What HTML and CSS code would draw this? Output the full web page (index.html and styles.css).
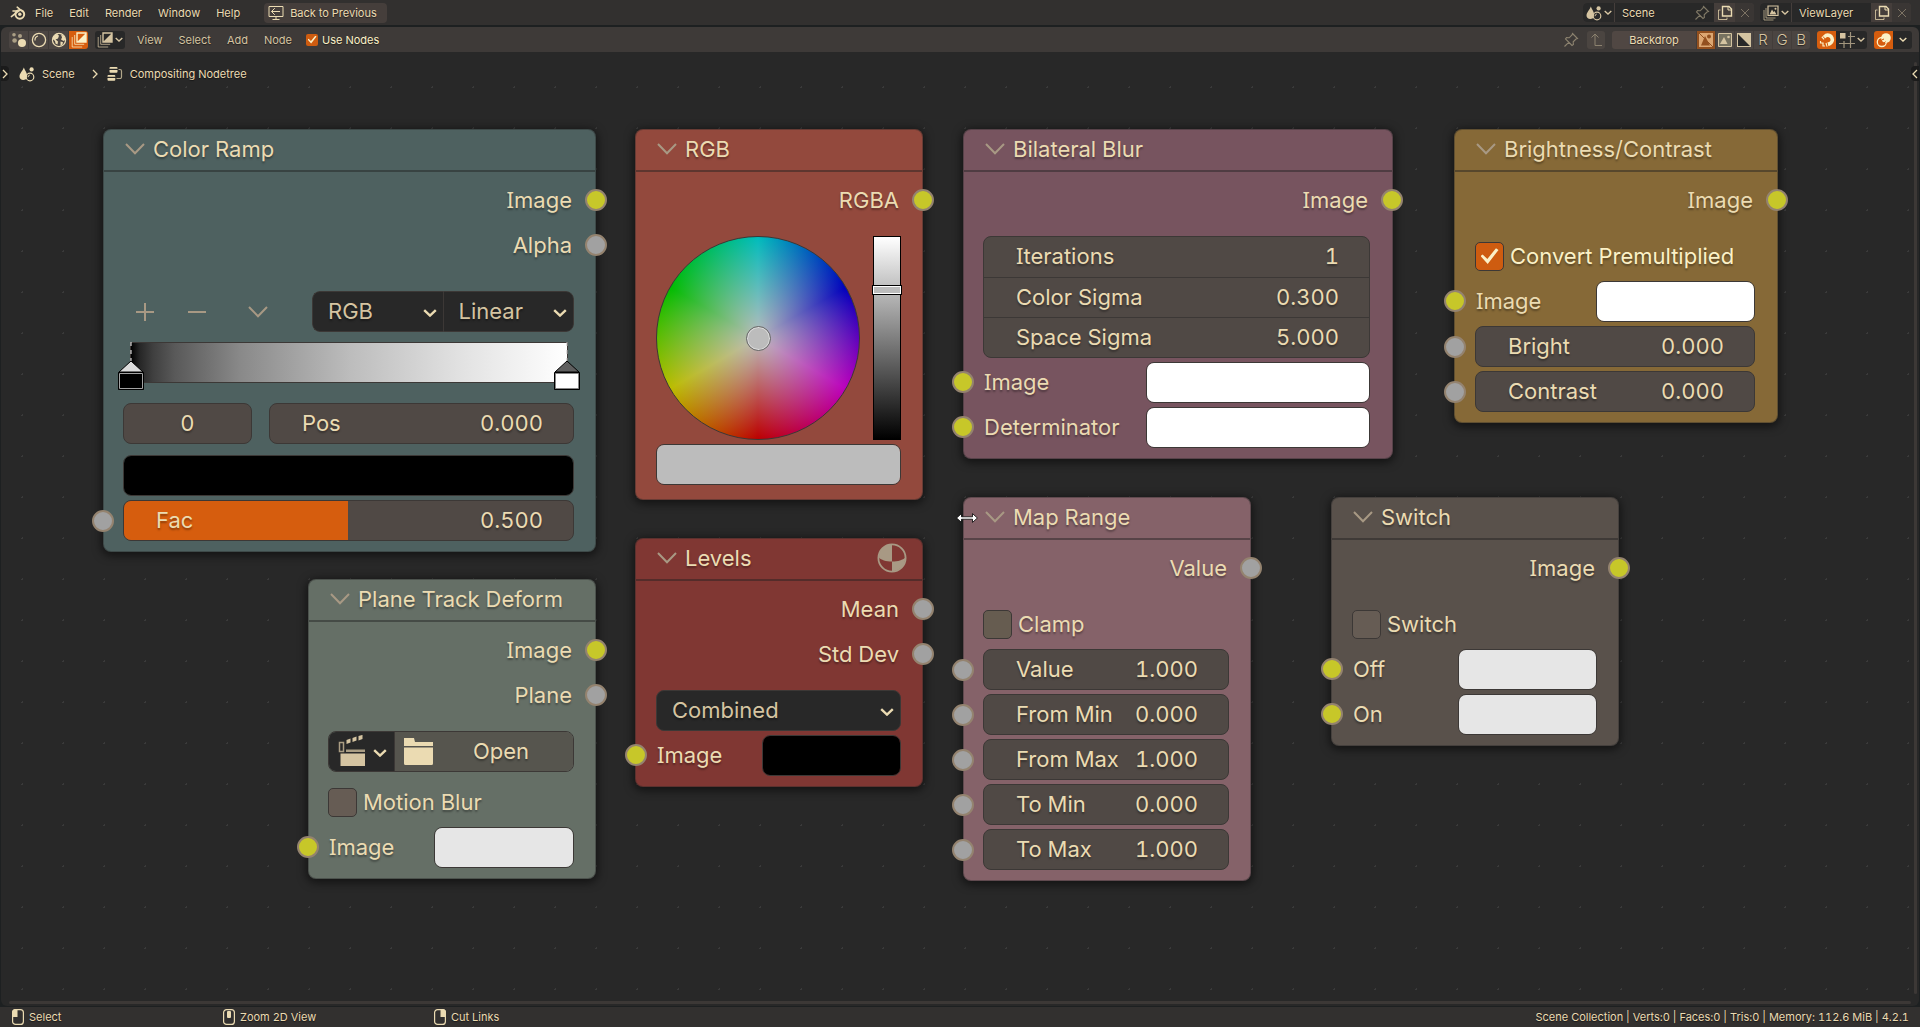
FILE: index.html
```html
<!DOCTYPE html>
<html lang="en">
<head>
<meta charset="utf-8">
<meta name="viewport" content="width=device-width, initial-scale=1">
<title>Compositing Nodetree</title>
<link rel="stylesheet" href="styles.css">
</head>
<body>
<svg class="sprite" aria-hidden="true">
  <symbol id="chev" viewBox="0 0 14 8"><path d="M1.2 1.2 7 6.6 12.8 1.2" fill="none" stroke="currentColor" stroke-width="2.4"/></symbol>
  <symbol id="fold" viewBox="0 0 20 12"><path d="M1 1 10 10.2 19 1" fill="none" stroke="currentColor" stroke-width="2"/></symbol>
  <symbol id="blender" viewBox="0 0 16 16"><g fill="none" stroke="currentColor"><circle cx="9.8" cy="9.3" r="4.4" stroke-width="2"/><path d="M1.4 11.6 9.8 5M3 6h6M7.2 2.2 13.2 7" stroke-width="1.6" stroke-linecap="round"/></g><circle cx="9.8" cy="9.3" r="1.7" fill="currentColor"/></symbol>
  <symbol id="back" viewBox="0 0 16 16"><path d="M1 1.5h14v10H1zM8 12v2.5M4.5 14.5h7M12 6.5H3.5M6.8 3.2 3.5 6.5l3.3 3.3" fill="none" stroke="currentColor"/></symbol>
  <symbol id="scene" viewBox="0 0 16 16"><path d="M4.8 1.5C6 4.8 8.2 7 8.2 10A5.4 5.4 0 0 0 7 13.3c-3.200 1.800-6.500.2-6.500-2.800C.5 7.500 3.800 4.800 4.800 1.500z" fill="currentColor"/><circle cx="12.600" cy="3.400" r="2.100" fill="currentColor"/><circle cx="11" cy="11" r="3.800" fill="none" stroke="currentColor" stroke-width="1.200"/><path d="M9 11.200a2.200 2.200 0 0 1 1.800-2.200" fill="none" stroke="currentColor"/></symbol>
  <symbol id="nodetree" viewBox="0 0 16 16"><path d="M3.500 1h6a1 1 0 0 1 1 1v.8h-8V2a1 1 0 0 1 1-1zM2.500 4h8v1.800a1 1 0 0 1-1 1h-6a1 1 0 0 1-1-1zM1.500 9h5.800a1 1 0 0 1 1 1v.8H.5V10a1 1 0 0 1 1-1zM.5 12h7.800v1.800a1 1 0 0 1-1 1H1.500a1 1 0 0 1-1-1z" fill="currentColor"/><path d="M11.500 3.500h1.500a1.500 1.500 0 0 1 1.500 1.500v6a1.500 1.500 0 0 1-1.500 1.500H9.500" fill="none" stroke="currentColor" stroke-width="1.200" opacity=".7"/></symbol>
  <symbol id="dots" viewBox="0 0 16 16"><circle cx="11" cy="11" r="4" fill="currentColor"/><g fill="currentColor" opacity=".6"><circle cx="3" cy="2.800" r="1.800"/><circle cx="9" cy="4" r="2"/><circle cx="3.600" cy="8.500" r="2.300"/></g></symbol>
  <symbol id="ball" viewBox="0 0 16 16"><circle cx="8" cy="8" r="6.600" fill="none" stroke="currentColor" stroke-width="1.300"/><path d="M4 8.500A4.300 4.300 0 0 1 7 4" fill="none" stroke="currentColor" stroke-width="1.200"/></symbol>
  <symbol id="world" viewBox="0 0 16 16"><circle cx="8" cy="8" r="6.600" fill="none" stroke="currentColor" stroke-width="1.200"/><path d="M2 4.500 6 1.800l2 2-1 2.700-2.500 1 2.500 2-.5 3-2-1-.500-2.500L1.600 7zM10 2.500l3.500 1.500.8 4-1.800 1-2.500-1.500 1-2zM9.500 9.500l2.500.7-.5 2.300-2 1.500z" fill="currentColor"/></symbol>
  <symbol id="comp" viewBox="0 0 16 16"><path d="M6 1h9v9H6z" fill="none" stroke="currentColor" stroke-width="1.400"/><path d="M15 1v9H6z" fill="currentColor"/><path d="M3.700 3v9.300h9.500M1.200 5v10h10" fill="none" stroke="currentColor" opacity=".75"/></symbol>
  <symbol id="layers" viewBox="0 0 16 16"><path d="M5 1h10v9.500H5z" fill="none" stroke="currentColor" stroke-width="1.200"/><path d="M6.500 9.500 9 4.500l1.500 2.500 1-1 2 3.500z" fill="currentColor"/><circle cx="12.500" cy="3.700" r="1" fill="currentColor"/><path d="M3 3v10h9.500M1 5v10h9.500" fill="none" stroke="currentColor" opacity=".7"/></symbol>
  <symbol id="pin" viewBox="0 0 16 16"><path d="M9.500 1.500 14.500 6.500 13 7l-2.800 2.800.2 2.700-1.400 1L2.500 7l1-1.400 2.700.2L9 3zM5.700 10.300 1.500 14.500" fill="none" stroke="currentColor" stroke-width="1.100"/></symbol>
  <symbol id="copy" viewBox="0 0 16 16"><path d="M5.500 1.500H12L14.500 4v7h-9z" fill="none" stroke="currentColor" stroke-width="1.400"/><path d="M11 1.500V5h3.500" fill="none" stroke="currentColor"/><path d="M3.500 5h-2v9.500H10v-2" fill="none" stroke="currentColor" opacity=".75"/></symbol>
  <symbol id="cross" viewBox="0 0 16 16"><path d="m4 4 8 8M12 4l-8 8" stroke="currentColor"/></symbol>
  <symbol id="up" viewBox="0 0 16 16"><path d="M7 2v11.500h7M3.500 5.500 7 2l3.500 3.500" fill="none" stroke="currentColor"/></symbol>
  <symbol id="imga" viewBox="0 0 16 16"><path fill-rule="evenodd" d="M1 1h14v14H1zM3 13.500h9L7 4zM11 2.500a2 2 0 1 0 .01 4 2 2 0 0 0 0-4z" fill="currentColor"/><path d="m1 1 14 14" stroke="#93501f"/></symbol>
  <symbol id="img" viewBox="0 0 16 16"><path d="M1.500 1.500h13v13h-13z" fill="#777260" stroke="currentColor"/><path d="M3 12 7 5l3.500 7z" fill="currentColor"/><circle cx="11.500" cy="5" r="1.300" fill="currentColor"/></symbol>
  <symbol id="alpha" viewBox="0 0 16 16"><path d="M1 1h14v14H1z" fill="currentColor"/><path d="M2 2v12h12z" fill="#282828"/></symbol>
  <symbol id="magnet" viewBox="0 0 16 16"><path d="M3.500 6.500 7 3.500a4.500 4.500 0 1 1 3.500 8.300L7 13" fill="none" stroke="currentColor" stroke-width="3.600"/><path d="m4 4.500 2.500 3M8 10.500l1 4" stroke="#d65d0e"/><path d="M1.500 9v2h2.500v3h2" fill="none" stroke="currentColor" stroke-width="1.200"/></symbol>
  <symbol id="snap" viewBox="0 0 16 16"><path d="M1 1h5.500v5.500H1z" fill="currentColor"/><path d="M11.500 0v16M5 9v7M9 4.500h7M0 11.500h16" stroke="currentColor" opacity=".7" stroke-width="1.200"/></symbol>
  <symbol id="overlay" viewBox="0 0 16 16"><circle cx="10" cy="6" r="4.800" fill="currentColor"/><circle cx="5.800" cy="10" r="4.500" fill="none" stroke="currentColor" stroke-width="1.300"/><path d="M5.500 8.500a4 4 0 0 1 2.500-1.500M8 11l1.500-1.500" stroke="#d65d0e"/></symbol>
  <symbol id="clip" viewBox="0 0 28 32"><path d="M2.500 18.500H27v12.500H2.500z" fill="currentColor"/><path d="M8 14.500h19v2.600H8z" fill="currentColor" opacity=".75"/><path d="M1.500 7.500h4v9h-4z" fill="none" stroke="currentColor" stroke-width="1.500" opacity=".75"/><path d="m8.500 5 4-1.600v4l-4 1.600zM14.500 2.900l4-1.500v4l-4 1.500zM20.500.9l4-1v4l-4 1.500z" fill="currentColor"/></symbol>
  <symbol id="folder" viewBox="0 0 29 27"><path d="M0 0h10l1 4h18v4H0zM0 9.500h29V25.500q0 1.500-1.500 1.500h-26Q0 27 0 25.500z" fill="currentColor"/></symbol>
  <symbol id="mat" viewBox="0 0 30 30"><circle cx="15" cy="15" r="13.600" fill="none" stroke="currentColor" stroke-width="1.800"/><path d="M15 1v17.500C9 18.500 4 17 2 14.500A13 13 0 0 1 15 1zM15 18.500c6 0 11-1.500 13.200-4 .3 8.500-6 13.700-13.200 13.700z" fill="currentColor"/></symbol>
</svg>

<header class="topbar">
  <svg class="icon"><use href="#blender"/></svg>
  <nav class="menus" aria-label="Main">
    <a href="#">File</a><a href="#">Edit</a><a href="#">Render</a><a href="#">Window</a><a href="#">Help</a>
  </nav>
  <button class="back"><svg class="icon"><use href="#back"/></svg>Back to Previous</button>
  <div class="idgroup scene-id">
    <button class="drop" aria-label="Browse scene"><svg class="icon"><use href="#scene"/></svg><svg class="mini"><use href="#chev"/></svg></button>
    <div class="name"><input type="text" value="Scene" aria-label="Scene"><svg class="icon dim"><use href="#pin"/></svg></div>
    <button aria-label="New scene"><svg class="icon"><use href="#copy"/></svg></button>
    <button class="off" aria-label="Delete scene"><svg class="icon"><use href="#cross"/></svg></button>
  </div>
  <div class="idgroup layer-id">
    <button class="drop" aria-label="Browse view layer"><svg class="icon"><use href="#layers"/></svg><svg class="mini"><use href="#chev"/></svg></button>
    <div class="name"><input type="text" value="ViewLayer" aria-label="View layer"></div>
    <button aria-label="New view layer"><svg class="icon"><use href="#copy"/></svg></button>
    <button class="off" aria-label="Delete view layer"><svg class="icon"><use href="#cross"/></svg></button>
  </div>
</header>

<main class="editor">
  <div class="toolbar">
    <div class="seg">
      <button aria-label="Geometry"><svg class="icon"><use href="#dots"/></svg></button>
      <button aria-label="Shader"><svg class="icon"><use href="#ball"/></svg></button>
      <button aria-label="World"><svg class="icon"><use href="#world"/></svg></button>
      <button class="on" aria-label="Compositor"><svg class="icon"><use href="#comp"/></svg></button>
    </div>
    <button class="drop solo" aria-label="Editor type"><svg class="icon"><use href="#comp"/></svg><svg class="mini"><use href="#chev"/></svg></button>
    <nav class="menus" aria-label="Editor"><a href="#">View</a><a href="#">Select</a><a href="#">Add</a><a href="#">Node</a></nav>
    <label class="use"><input type="checkbox" class="check small" checked>Use Nodes</label>
    <button class="plain dim" aria-label="Pin"><svg class="icon"><use href="#pin"/></svg></button>
    <button class="parent dim" aria-label="Parent tree"><svg class="icon"><use href="#up"/></svg></button>
    <div class="seg channels">
      <button class="backdrop">Backdrop</button>
      <button class="amber" aria-label="Color and alpha"><svg class="icon"><use href="#imga"/></svg></button>
      <button aria-label="Color"><svg class="icon"><use href="#img"/></svg></button>
      <button aria-label="Alpha"><svg class="icon"><use href="#alpha"/></svg></button>
      <button>R</button><button>G</button><button>B</button>
    </div>
    <div class="seg snapgroup">
      <button class="on" aria-label="Snap"><svg class="icon"><use href="#magnet"/></svg></button>
      <button class="drop" aria-label="Snap to"><svg class="icon"><use href="#snap"/></svg><svg class="mini"><use href="#chev"/></svg></button>
    </div>
    <div class="seg overlays">
      <button class="on" aria-label="Overlays"><svg class="icon"><use href="#overlay"/></svg></button>
      <button class="dark" aria-label="Overlay options"><svg class="mini"><use href="#chev"/></svg></button>
    </div>
  </div>

  <div class="canvas">
    <nav class="crumbs" aria-label="Path">
      <svg class="icon"><use href="#scene"/></svg><a href="#">Scene</a>
      <svg class="sep" viewBox="0 0 6 10"><path d="m1 1 4 4-4 4" fill="none" stroke="currentColor" stroke-width="1.300"/></svg>
      <svg class="icon"><use href="#nodetree"/></svg><a href="#">Compositing Nodetree</a>
    </nav>
    <button class="tab tab-left" aria-label="Show tools"><svg viewBox="0 0 6 10"><path d="m1 1 4 4-4 4" fill="none" stroke="currentColor" stroke-width="1.300"/></svg></button>
    <div class="vscroll"></div><div class="hscroll"></div>
    <button class="tab tab-right" aria-label="Show sidebar"><svg viewBox="0 0 6 10"><path d="M5 1 1 5l4 4" fill="none" stroke="currentColor" stroke-width="1.300"/></svg></button>

    <section class="node ramp">
      <h2><svg><use href="#fold"/></svg>Color Ramp</h2>
      <div class="body">
        <div class="out"><span class="cap">Image</span><i class="sock yellow"></i></div>
        <div class="out">Alpha<i class="sock"></i></div>
        <div class="tools">
          <button aria-label="Add stop"><svg viewBox="0 0 20 20"><path d="M10 1v18M1 10h18" stroke="currentColor" stroke-width="2"/></svg></button>
          <button aria-label="Remove stop"><svg viewBox="0 0 20 20"><path d="M1 10h18" stroke="currentColor" stroke-width="2"/></svg></button>
          <button class="more" aria-label="Ramp options"><svg viewBox="0 -4 20 20"><use href="#fold" width="20" height="12"/></svg></button>
          <div class="modes">
            <div class="pick"><select aria-label="Color mode"><option>RGB</option></select><svg><use href="#chev"/></svg></div>
            <div class="pick"><select aria-label="Interpolation"><option>Linear</option></select><svg><use href="#chev"/></svg></div>
          </div>
        </div>
        <div class="gradient">
          <svg class="stop first" viewBox="0 0 26 48"><path d="M13 0v20" stroke="#fff" stroke-dasharray="4 4"/><path d="M1 30 13 19l12 11z" fill="#dcdcdc" stroke="#000"/><path d="M.5 30.500h25v17H.5z" fill="#000" stroke="#000"/><path d="M1.500 31.500h23v15h-23z" fill="#000" stroke="#a3a3a3"/></svg>
          <svg class="stop last" viewBox="0 0 26 48"><path d="M13 0v20" stroke="#bbb" stroke-dasharray="4 4"/><path d="M1 30 13 19l12 11z" fill="#5f5f5f" stroke="#000"/><path d="M.5 30.500h25v17H.5z" fill="#000" stroke="#000"/><path d="M1.500 31.500h23v15h-23z" fill="#fff" stroke="#888"/></svg>
        </div>
        <div class="pair">
          <input class="index" type="text" value="0" aria-label="Active stop">
          <label class="field">Pos<input type="text" value="0.000"></label>
        </div>
        <input type="color" class="swatch" value="#000000" aria-label="Stop color">
        <label class="field slider"><input type="range" min="0" max="1" step="0.001" value="0.5"><span>Fac</span><output>0.500</output><i class="sock in"></i></label>
      </div>
    </section>

    <section class="node track">
      <h2><svg><use href="#fold"/></svg>Plane Track Deform</h2>
      <div class="body">
        <div class="out"><span class="cap">Image</span><i class="sock yellow"></i></div>
        <div class="out">Plane<i class="sock"></i></div>
        <div class="open">
          <button class="browse" aria-label="Browse clip"><svg class="clip"><use href="#clip"/></svg><svg class="chev"><use href="#chev"/></svg></button>
          <button class="load"><svg><use href="#folder"/></svg><span>Open</span></button>
        </div>
        <label class="tick"><input type="checkbox" class="check">Motion Blur</label>
        <label class="color"><span class="cap">Image</span><input type="color" class="swatch" value="#e6e6e6"><i class="sock in yellow"></i></label>
      </div>
    </section>

    <section class="node rgb">
      <h2><svg><use href="#fold"/></svg>RGB</h2>
      <div class="body">
        <div class="out">RGBA<i class="sock yellow"></i></div>
        <div class="picker">
          <div class="wheel"><i></i></div>
          <input type="range" min="0" max="1" step="0.01" value="0.75" aria-label="Value">
        </div>
        <input type="color" class="swatch" value="#bcbcbc" aria-label="Color">
      </div>
    </section>

    <section class="node levels">
      <h2><svg><use href="#fold"/></svg>Levels<svg class="mat"><use href="#mat"/></svg></h2>
      <div class="body">
        <div class="out">Mean<i class="sock"></i></div>
        <div class="out">Std Dev<i class="sock"></i></div>
        <div class="pick"><select aria-label="Channel"><option>Combined</option></select><svg><use href="#chev"/></svg></div>
        <label class="color"><span class="cap">Image</span><input type="color" class="swatch" value="#000000"><i class="sock in yellow"></i></label>
      </div>
    </section>

    <section class="node bilateral">
      <h2><svg><use href="#fold"/></svg>Bilateral Blur</h2>
      <div class="body">
        <div class="out"><span class="cap">Image</span><i class="sock yellow"></i></div>
        <div class="stack">
          <label class="field"><span class="cap">Iterations</span><input type="text" value="1"></label>
          <label class="field">Color Sigma<input type="text" value="0.300"></label>
          <label class="field">Space Sigma<input type="text" value="5.000"></label>
        </div>
        <label class="color"><span class="cap">Image</span><input type="color" class="swatch" value="#ffffff"><i class="sock in yellow"></i></label>
        <label class="color">Determinator<input type="color" class="swatch" value="#ffffff"><i class="sock in yellow"></i></label>
      </div>
    </section>

    <section class="node bright">
      <h2><svg><use href="#fold"/></svg>Brightness/Contrast</h2>
      <div class="body">
        <div class="out"><span class="cap">Image</span><i class="sock yellow"></i></div>
        <label class="tick lit"><input type="checkbox" class="check" checked>Convert Premultiplied</label>
        <label class="color"><span class="cap">Image</span><input type="color" class="swatch" value="#ffffff"><i class="sock in yellow"></i></label>
        <label class="field">Bright<input type="text" value="0.000"><i class="sock in"></i></label>
        <label class="field">Contrast<input type="text" value="0.000"><i class="sock in"></i></label>
      </div>
    </section>

    <section class="node maprange">
      <h2><svg><use href="#fold"/></svg>Map Range</h2>
      <div class="body">
        <div class="out">Value<i class="sock"></i></div>
        <label class="tick"><input type="checkbox" class="check">Clamp</label>
        <label class="field">Value<input type="text" value="1.000"><i class="sock in"></i></label>
        <label class="field">From Min<input type="text" value="0.000"><i class="sock in"></i></label>
        <label class="field">From Max<input type="text" value="1.000"><i class="sock in"></i></label>
        <label class="field">To Min<input type="text" value="0.000"><i class="sock in"></i></label>
        <label class="field">To Max<input type="text" value="1.000"><i class="sock in"></i></label>
      </div>
    </section>

    <section class="node switch">
      <h2><svg><use href="#fold"/></svg>Switch</h2>
      <div class="body">
        <div class="out"><span class="cap">Image</span><i class="sock yellow"></i></div>
        <label class="tick"><input type="checkbox" class="check">Switch</label>
        <label class="color">Off<input type="color" class="swatch" value="#e6e6e6"><i class="sock in yellow"></i></label>
        <label class="color">On<input type="color" class="swatch" value="#e6e6e6"><i class="sock in yellow"></i></label>
      </div>
    </section>

    <svg class="pointer" viewBox="0 0 22 10"><path d="M.6 5 5.500.6V3.800h11V.6L21.400 5l-4.900 4.400V6.200h-11v3.200z" fill="#fff" stroke="#000" stroke-width=".8"/></svg>
  </div>
</main>

<footer class="status">
  <div class="hint"><svg viewBox="0 0 12 16"><rect x=".6" y=".6" width="10.800" height="14.800" rx="3" fill="none" stroke="currentColor" stroke-width="1.200"/><path d="M0 3.500Q0 0 3.500 0H5.500v8H0z" fill="currentColor"/></svg>Select</div>
  <div class="hint"><svg viewBox="0 0 12 16"><rect x=".6" y=".6" width="10.800" height="14.800" rx="3" fill="none" stroke="currentColor" stroke-width="1.200"/><rect x="4" y="2" width="4" height="7" rx="1" fill="currentColor"/></svg>Zoom 2D View</div>
  <div class="hint"><svg viewBox="0 0 12 16"><rect x=".6" y=".6" width="10.800" height="14.800" rx="3" fill="none" stroke="currentColor" stroke-width="1.200"/><path d="M12 3.500Q12 0 8.500 0H6.500v8H12z" fill="currentColor"/></svg>Cut Links</div>
  <div class="stats">Scene Collection | Verts:0 | Faces:0 | Tris:0 | Memory: 112.6 MiB | 4.2.1</div>
</footer>
</body>
</html>
```
FILE: styles.css
```css
:root {
  --text: #ebdbb2;
  --soft: #d5c4a1;
  --line: #3c3836;
  --field: #504945;
  --dark: #282828;
  --orange: #d65d0e;
}

* { box-sizing: border-box; }

body {
  margin: 0;
  height: 100vh;
  display: flex;
  flex-direction: column;
  overflow: hidden;
  background: #1d2021;
  color: var(--text);
  font: 11px/16px Inter, "Liberation Sans", sans-serif;
  font-feature-settings: "tnum";
  text-shadow: 0 1px 1px rgba(0, 0, 0, .5);
}

button, input, select, output {
  margin: 0;
  padding: 0;
  border: 0;
  background: none;
  color: inherit;
  font: inherit;
  font-feature-settings: inherit;
  text-shadow: inherit;
  letter-spacing: inherit;
}

a { color: inherit; text-decoration: none; }
svg { display: block; flex: none; }
.sprite { position: absolute; width: 0; height: 0; }
.icon { width: 16px; height: 16px; }
.mini { width: 8px; height: 5px; }
.dim { opacity: .45; }

/* Top bar */
.topbar {
  display: flex;
  align-items: center;
  height: 25px;
  padding: 0 9px 0 10px;
  background: #32302f;
}

.menus { display: flex; gap: 16px; color: var(--soft); }
.topbar .menus { margin-left: 9px; color: var(--text); }

.back {
  display: flex;
  align-items: center;
  gap: 6px;
  height: 20px;
  margin-left: 24px;
  padding: 0 10px 0 4px;
  border-radius: 4px;
  background: #453e3b;
}

.idgroup {
  display: flex;
  height: 19px;
  border-radius: 4px;
  overflow: hidden;
  background: #453e3b;
  gap: 1px;
}

.idgroup button { width: 19px; display: flex; align-items: center; justify-content: center; }
.drop { display: flex; align-items: center; justify-content: center; gap: 2px; width: 30px; background: var(--dark); color: var(--soft); }
.idgroup .drop { width: 31px; }
.idgroup .off { color: #7d7364; background: #3a3634; }
.idgroup .name { display: flex; align-items: center; background: var(--dark); }
.idgroup input { width: 79px; padding-left: 7px; }
.scene-id { margin-left: auto; }
.scene-id .name { padding-right: 4px; }
.layer-id { margin-left: 6px; }

/* Editor */
.editor {
  flex: 1;
  display: flex;
  flex-direction: column;
  margin: 2px 1px 1px;
  border-radius: 6px;
  overflow: hidden;
}

.toolbar {
  display: flex;
  align-items: center;
  height: 25px;
  padding: 0 7px 0 8px;
  background: #3e3a38;
}

.seg { display: flex; gap: 1px; height: 18px; border-radius: 3px; overflow: hidden; }
.seg button { display: flex; align-items: center; justify-content: center; width: 19px; background: #4b4542; }
.seg .on { background: var(--orange); color: #fbf1c7; }
.seg .drop { width: 31px; background: var(--dark); }
.seg .dark { background: var(--dark); }
.drop.solo { height: 18px; margin: 0 12px 0 7px; border-radius: 3px; }
.use { display: flex; align-items: center; gap: 4px; margin: 0 auto 0 14px; color: #fbf1c7; }
.plain, .parent { display: flex; align-items: center; justify-content: center; width: 18px; height: 18px; }
.plain { margin-right: 7px; }
.parent { border-radius: 3px; background: #5c534d; }
.channels { margin-left: 7px; gap: 0; font-size: 15px; font-weight: 300; color: var(--soft); }
.channels button + button { border-left: 1px solid #433d3a; }
.channels .backdrop { width: 84px; background: #504743; font-size: 11px; font-weight: 400; color: var(--text); }
.channels .amber { background: #93501f; color: #dda772; }
.snapgroup { margin-left: 7px; gap: 0; }
.overlays { margin-left: 7px; gap: 0; }

.check {
  appearance: none;
  flex: none;
  width: 29px;
  height: 29px;
  border: 1px solid var(--line);
  border-radius: 5px;
  background: #665c54;
}

.check:checked { display: grid; place-items: center; background: #ce5c10; }

.check:checked::before {
  content: "";
  width: 18px;
  height: 16px;
  background: #fbf1c7;
  clip-path: polygon(0 50%, 12% 40%, 38% 68%, 86% 2%, 100% 12%, 40% 100%);
}

.check.small { width: 12px; height: 12px; border: 0; border-radius: 2px; }
.check.small:checked::before { width: 9px; height: 8px; }

/* Node canvas */
.canvas {
  position: relative;
  flex: 1;
  background-color: var(--dark);
  background-image: radial-gradient(circle, #3a3a3a 1px, transparent 1px);
  background-size: 41px 41px;
  background-position: 1px 15px;
}

.crumbs { display: flex; align-items: center; height: 16px; margin: 14px 0 0 18px; }
.crumbs a { margin-left: 7px; }
.crumbs .sep { width: 6px; height: 10px; margin: 0 9px 0 17px; }

.tab {
  position: absolute;
  top: 14px;
  width: 8px;
  height: 15px;
  display: grid;
  place-items: center;
  background: #1b1b1b;
}

.tab svg { width: 6px; height: 10px; }
.tab-left { left: 0; border-radius: 0 4px 4px 0; }
.tab-right { right: 0; border-radius: 4px 0 0 4px; }
.vscroll, .hscroll { position: absolute; background: var(--line); border-radius: 2px; }
.vscroll { top: 10px; right: 2px; bottom: 12px; width: 3px; }
.hscroll { left: 8px; right: 8px; bottom: 2px; height: 3px; }

/* Nodes */
.node {
  position: absolute;
  width: 288px;
  border: 1px solid rgba(40, 40, 40, .4);
  border-radius: 8px;
  background: var(--tint);
  box-shadow: 0 2px 8px 2px rgba(0, 0, 0, .5);
  font-size: 22px;
  line-height: 28px;
  text-shadow: 0 2px 2px rgba(0, 0, 0, .35);
}

.ramp { left: 102px; top: 77px; width: 493px; --tint: #4e6160; }
.track { left: 307px; top: 527px; --tint: #656f66; }
.rgb { left: 634px; top: 77px; --tint: #93493d; }
.levels { left: 634px; top: 486px; --tint: #803733; }
.bilateral { left: 962px; top: 77px; width: 430px; --tint: #77545f; }
.bright { left: 1453px; top: 77px; width: 324px; --tint: #866937; }
.maprange { left: 962px; top: 445px; --tint: #856269; }
.switch { left: 1330px; top: 445px; --tint: #59514b; }

.node h2 {
  display: flex;
  align-items: center;
  gap: 8px;
  height: 42px;
  margin: 0;
  padding: 0 15px 2px 21px;
  border-bottom: 2px solid rgba(30, 30, 30, .45);
  font: inherit;
}

.node h2 svg { width: 20px; height: 12px; color: #a89984; }
.node h2 .mat { width: 30px; height: 30px; margin-left: auto; }

.body { display: flex; flex-direction: column; gap: 4px; padding: 8px 21px 10px 19px; }
.levels .body, .switch .body, .rgb .body, .bright .body { padding-left: 20px; }
.bilateral .body, .bright .body { padding-right: 22px; }

.out, .tick, .color, .field { position: relative; display: flex; align-items: center; height: 41px; padding-bottom: 2px; }
.out { justify-content: flex-end; padding-right: 2px; }
.out + :not(.out) { margin-top: 11px; }

.cap::first-letter { font-family: "Noto Sans", sans-serif; line-height: 1; }

.sock {
  position: absolute;
  top: 9px;
  right: -33px;
  width: 22px;
  height: 22px;
  border: 2px solid #94836f;
  border-radius: 50%;
  background: #a1a1a1;
}

.sock.yellow { background: #c7c729; }
.sock.in { left: -31px; }

.tick { gap: 6px; padding-bottom: 1px; }
.lit { color: #fbf1c7; }

.swatch {
  appearance: none;
  width: 100%;
  height: 41px;
  border: 1px solid var(--line);
  border-radius: 8px;
  overflow: hidden;
}

.swatch::-webkit-color-swatch-wrapper { padding: 0; }
.swatch::-webkit-color-swatch { border: 0; border-radius: 0; }
.color { justify-content: space-between; padding-left: 1px; }
.color .swatch { flex: 0 0 57%; align-self: flex-start; }
.bilateral .swatch { flex-basis: 58%; }

.field {
  flex: 1;
  min-width: 0;
  flex-basis: 41px;
  padding: 0 30px 2px 32px;
  border: 1px solid var(--line);
  border-radius: 8px;
  background: var(--field);
}

.field input[type="text"] { flex: 1; width: 0; min-width: 0; text-align: right; }
.field .sock.in { left: -32px; }

.stack { border: 1px solid var(--line); border-radius: 8px; background: var(--field); }
.stack .field { height: 40px; flex: none; border: 0; border-radius: 0; background: none; }
.stack .field + .field { border-top: 1px solid var(--line); }

.pick { position: relative; display: flex; align-items: center; height: 41px; border: 1px solid var(--line); border-radius: 8px; background: var(--dark); color: var(--soft); }
.pick select { appearance: none; width: 100%; height: 39px; padding: 0 0 2px 15px; }
.pick svg { position: absolute; right: 6px; top: 17px; width: 14px; height: 8px; color: var(--text); }

/* Color Ramp */
.out + .tools { margin-top: 21px; }
.tools { display: flex; align-items: center; padding-left: 12px; color: #a89984; }
.tools button { width: 20px; height: 20px; margin-right: 32px; }
.tools .more { margin: 0 0 0 9px; }
.tools button svg { width: 20px; height: 20px; }
.modes { display: flex; width: 262px; margin-left: auto; border-radius: 8px; overflow: hidden; }
.modes .pick { flex: 1; }
.modes .pick:first-child { border-radius: 8px 0 0 8px; border-right: 0; }
.modes .pick:last-child { border-radius: 0 8px 8px 0; }

.gradient {
  position: relative;
  height: 41px;
  margin: 6px 6px 0 7px;
  border: 1px solid var(--line);
  background: linear-gradient(90deg, #000, #262626 2%, #3f3f3f 5%, #595959 10%, #898989 25%, #bcbcbc 50%, #e1e1e1 75%, #fff);
}

.stop { position: absolute; top: -1px; width: 26px; height: 48px; }
.first { left: -13px; }
.last { right: -13px; }

.pair { display: flex; gap: 17px; margin: 16px 0 7px; }
.index { width: 129px; height: 41px; padding-bottom: 2px; border: 1px solid var(--line); border-radius: 8px; background: var(--field); text-align: center; }

.slider { justify-content: space-between; }
.slider span, .slider output { position: relative; pointer-events: none; }
.slider input {
  appearance: none;
  position: absolute;
  inset: 0;
  width: 100%;
  border-radius: 7px;
  background: linear-gradient(90deg, var(--orange) 50%, transparent 50%);
}
.slider input::-webkit-slider-thumb { appearance: none; width: 1px; height: 39px; }

/* Plane Track Deform */
.open { display: flex; height: 41px; margin-bottom: 6px; border: 1px solid var(--line); border-radius: 8px; overflow: hidden; }
.browse { display: flex; gap: 7px; width: 65px; padding: 3px 0 0 9px; background: var(--dark); color: var(--soft); }
.clip { width: 28px; height: 32px; }
.browse .chev { width: 14px; height: 8px; margin-top: 14px; color: var(--text); }
.load { flex: 1; display: flex; align-items: center; padding-left: 9px; border-left: 1px solid var(--line); background: #56554e; }
.load svg { width: 29px; height: 27px; }
.load span { flex: 1; padding: 0 4px 2px 0; text-align: center; }

/* RGB */
.rgb .body { padding-bottom: 14px; }
.picker { display: flex; justify-content: space-between; height: 204px; }
.wheel {
  display: grid;
  place-items: center;
  width: 204px;
  border: 1px solid var(--line);
  border-radius: 50%;
  background:
    radial-gradient(circle closest-side, #bcbcbc, rgba(188, 188, 188, 0)),
    conic-gradient(#00bcbc, #0000bc 60deg, #bc00bc 120deg, #bc0000 180deg, #bcbc00 240deg, #00bc00 300deg, #00bcbc);
}
.wheel i { width: 25px; height: 25px; border: 1px solid #666; border-radius: 50%; background: #bcbcbc; box-shadow: inset 0 0 0 1px #ddd; }
.picker input {
  appearance: none;
  writing-mode: vertical-lr;
  direction: rtl;
  width: 28px;
  height: 204px;
  border: 1px solid #000;
  background: linear-gradient(#fff, #000);
}
.picker input::-webkit-slider-thumb {
  appearance: none;
  width: 28px;
  height: 8px;
  border: 1px solid #fff;
  background: #bcbcbc;
  box-shadow: 0 0 0 1px #000;
}

.maprange .check { background: #665c50; }

.pointer { position: absolute; left: 955px; top: 461px; width: 22px; height: 10px; }

/* Status bar */
.status { display: flex; align-items: center; height: 20px; padding: 0 11px 0 12px; background: #32302f; }
.hint { display: flex; align-items: center; gap: 5px; width: 211px; }
.hint svg { width: 12px; height: 16px; }
.stats { margin-left: auto; }
```
